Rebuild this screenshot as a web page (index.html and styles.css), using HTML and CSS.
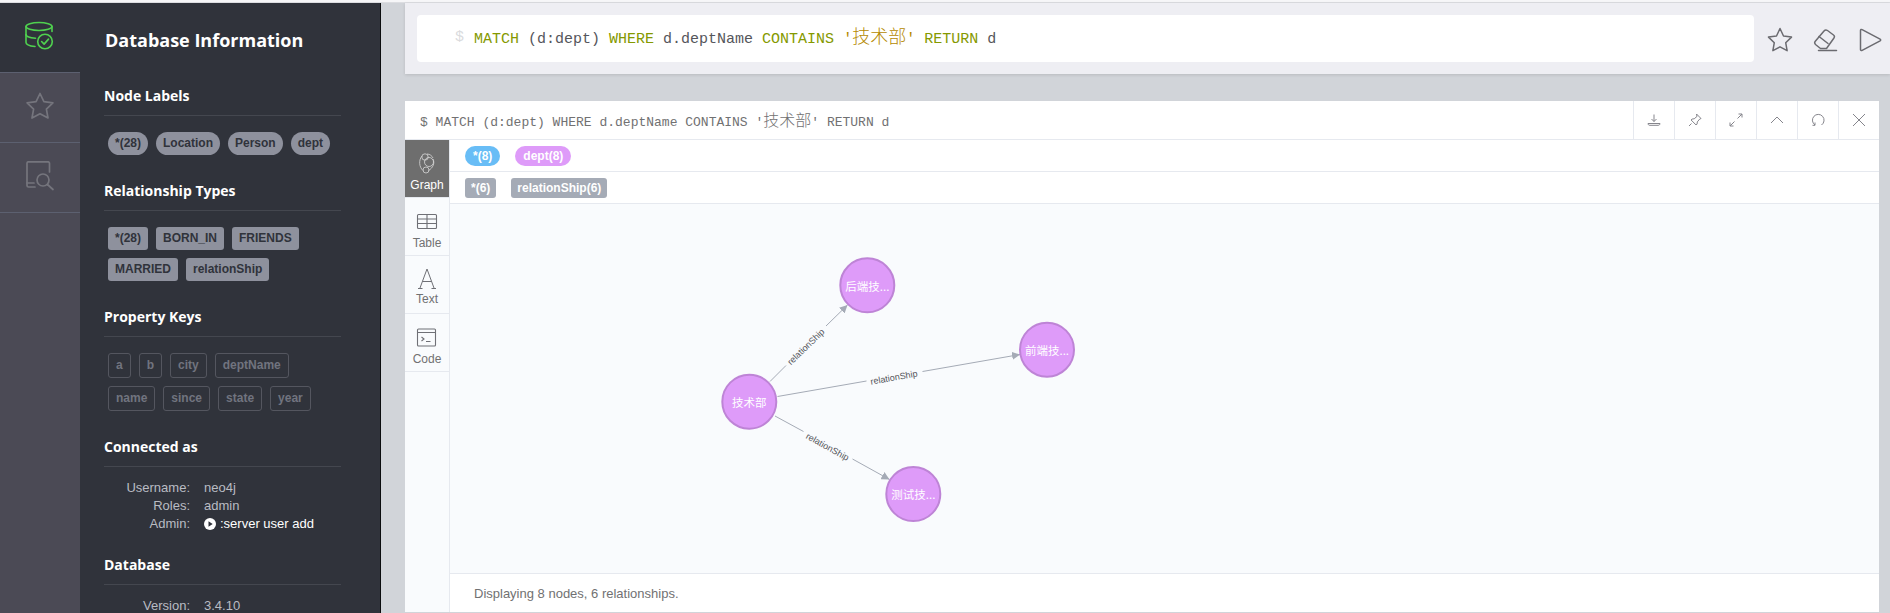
FILE: index.html
```html
<!DOCTYPE html>
<html lang="en">
<head>
<meta charset="utf-8">
<title>Neo4j Browser</title>
<link rel="stylesheet" href="styles.css">
</head>
<body>
<div class="app">
  <nav class="rail">
    <div class="rail-tab rail-tab-active">
      <svg class="rail-icon" viewBox="0 0 30 30" fill="none" stroke="#4fd14f" stroke-width="1.6" stroke-linecap="round" stroke-linejoin="round">
        <ellipse cx="14" cy="5.500" rx="13" ry="4"/>
        <path d="M1 5.500v16c0 2 4 3.500 9 4"/>
        <path d="M1 13.500c0 2 4 3.300 9.500 3.800"/>
        <path d="M27 5.500v5"/>
        <circle cx="20" cy="20.500" r="7.300"/>
        <path d="M16.600 20.500l2.500 2.600 4.400-5"/>
      </svg>
    </div>
    <div class="rail-tab">
      <svg class="rail-icon" viewBox="0 0 30 30" fill="none" stroke="#75757d" stroke-width="1.7" stroke-linejoin="round">
        <path d="M15 2.500l3.900 8.200 9 1.200-6.500 6.200 1.600 8.900-8-4.300-8 4.300 1.600-8.900-6.500-6.200 9-1.200z"/>
      </svg>
    </div>
    <div class="rail-tab">
      <svg class="rail-icon" viewBox="0 0 30 30" fill="none" stroke="#75757d" stroke-width="1.700" stroke-linecap="round" stroke-linejoin="round">
        <path d="M10 26H3.500A1.500 1.500 0 0 1 2 24.500V2.300A1.500 1.500 0 0 1 3.500 .8h19.500a1.500 1.500 0 0 1 1.500 1.500V11"/>
        <path d="M2 22h7"/>
        <circle cx="18" cy="19" r="6"/>
        <path d="M22.500 23.500l5.500 5"/>
      </svg>
    </div>
  </nav>

  <aside class="drawer">
    <h1 class="drawer-title">Database Information</h1>

    <section class="group group-labels">
      <h2 class="group-title">Node Labels</h2>
      <div class="tags">
        <span class="tag tag-round">*(28)</span>
        <span class="tag tag-round">Location</span>
        <span class="tag tag-round">Person</span>
        <span class="tag tag-round">dept</span>
      </div>
    </section>

    <section class="group group-types">
      <h2 class="group-title">Relationship Types</h2>
      <div class="tags">
        <span class="tag">*(28)</span>
        <span class="tag">BORN_IN</span>
        <span class="tag">FRIENDS</span>
        <span class="tag">MARRIED</span>
        <span class="tag">relationShip</span>
      </div>
    </section>

    <section class="group group-keys">
      <h2 class="group-title">Property Keys</h2>
      <div class="tags">
        <span class="tag tag-outline">a</span>
        <span class="tag tag-outline">b</span>
        <span class="tag tag-outline">city</span>
        <span class="tag tag-outline">deptName</span>
        <span class="tag tag-outline">name</span>
        <span class="tag tag-outline">since</span>
        <span class="tag tag-outline">state</span>
        <span class="tag tag-outline">year</span>
      </div>
    </section>

    <section class="group group-conn">
      <h2 class="group-title">Connected as</h2>
      <dl class="facts">
        <dt>Username:</dt><dd>neo4j</dd>
        <dt>Roles:</dt><dd>admin</dd>
        <dt>Admin:</dt>
        <dd class="fact-link">
          <svg class="play-dot" viewBox="0 0 12 12"><circle cx="6" cy="6" r="6" fill="#fff"/><path d="M4.500 3.200l4.200 2.800-4.200 2.800z" fill="#30333b"/></svg>
          :server user add
        </dd>
      </dl>
    </section>

    <section class="group group-db">
      <h2 class="group-title">Database</h2>
      <dl class="facts">
        <dt>Version:</dt><dd>3.4.10</dd>
      </dl>
    </section>
  </aside>

  <main class="main">
    <header class="editor">
      <div class="editor-input">
        <span class="prompt">$</span>
        <code class="cypher"><span class="kw">MATCH</span> (d:dept) <span class="kw">WHERE</span> d.deptName <span class="kw">CONTAINS</span> <span class="str">'<span class="cjk">技术部</span>'</span> <span class="kw">RETURN</span> d</code>
      </div>
      <div class="editor-actions">
        <svg class="editor-icon" viewBox="0 0 26 26" fill="none" stroke="#6b6b70" stroke-width="1.500" stroke-linejoin="round"><path d="M13 1.500l3.500 7.500 8 1.100-5.800 5.600 1.400 8-7.100-3.900-7.100 3.900 1.400-8L1.500 10.100l8-1.100z"/></svg>
        <svg class="editor-icon" viewBox="0 0 26 26" fill="none" stroke="#6b6b70" stroke-width="1.500" stroke-linecap="round" stroke-linejoin="round"><path d="M11 4c1-1.200 2.300-1.300 3.500-.5l6 4.500c1 .8 1.200 2 .3 3.200L13.500 21.500H7.500L2.500 17.500c-1-1-1-2.200-.2-3.200z"/><path d="M6 9.500l9 7"/><path d="M5.500 23.500h18"/></svg>
        <svg class="editor-icon" viewBox="0 0 26 26" fill="none" stroke="#6b6b70" stroke-width="1.500" stroke-linejoin="round"><path d="M1.500 3.500c0-1 .8-1.300 1.600-.9l18 9.500c.8.500.8 1.300 0 1.800l-18 9.500c-.8.400-1.600 0-1.600-.9z"/></svg>
      </div>
    </header>

    <article class="frame">
      <div class="frame-head">
        <code class="frame-query">$ MATCH (d:dept) WHERE d.deptName CONTAINS '<span class="cjk-small">技术部</span>' RETURN d</code>
        <div class="frame-buttons">
          <span class="frame-btn"><svg viewBox="0 0 14 14" fill="none" stroke="#85858c" stroke-width="1"><path d="M7 1.500v7M4.500 6L7 8.500 9.500 6"/><path d="M1 10.500c0 1.200.8 1.800 2 1.800h8c1.200 0 2-.6 2-1.800z"/></svg></span>
          <span class="frame-btn"><svg viewBox="0 0 14 14" fill="none" stroke="#85858c" stroke-width="1" stroke-linejoin="round"><path d="M8.500 1l4.500 4.500-1.300.6-2.400 2.800-.2 2.100-1 1-5-5 1-1 2.100-.2 2.800-2.400z"/><path d="M3.500 10.500L1 13"/></svg></span>
          <span class="frame-btn"><svg viewBox="0 0 14 14" fill="none" stroke="#85858c" stroke-width="1"><path d="M8.500 5.500L13 1M9.500 1H13v3.500"/><path d="M5.500 8.500L1 13M1 9.500V13h3.500"/></svg></span>
          <span class="frame-btn"><svg viewBox="0 0 14 14" fill="none" stroke="#85858c" stroke-width="1"><path d="M1 10l6-6 6 6"/></svg></span>
          <span class="frame-btn"><svg viewBox="0 0 14 14" fill="none" stroke="#85858c" stroke-width="1"><path d="M10.500 12A5.800 5.800 0 1 0 4 12"/><path d="M4 9.500V12.300H1.500"/></svg></span>
          <span class="frame-btn"><svg viewBox="0 0 14 14" fill="none" stroke="#85858c" stroke-width="1"><path d="M1 1l12 12M13 1L1 13"/></svg></span>
        </div>
      </div>

      <div class="frame-body">
        <ul class="views">
          <li class="view view-active">
            <svg class="view-icon" viewBox="0 0 24 24" fill="none" stroke="#d8d8d8" stroke-width=".8"><circle cx="10" cy="6" r="3.200"/><circle cx="14" cy="11" r="4.500"/><circle cx="11" cy="19" r="3"/><path d="M7 5C3.500 9 4 16 8 19.500M18 8c2 4 0 9-4.500 11.500M12 3c3 0 5 2 6 4"/></svg>
            <span>Graph</span>
          </li>
          <li class="view">
            <svg class="view-icon" viewBox="0 0 24 24" fill="none" stroke="#6f7076" stroke-width="1.100"><rect x="2.500" y="4.500" width="19" height="14" rx="1"/><path d="M2.500 9h19M2.500 13.500h19M12 4.500v14"/></svg>
            <span>Table</span>
          </li>
          <li class="view view-compact">
            <svg class="view-icon" viewBox="0 0 24 24" fill="none" stroke="#6f7076" stroke-width="1"><path d="M12 2L5 21M12 2l7 19M7.500 14.500h9M3 21.500h4.500M16.500 21.500H21"/></svg>
            <span>Text</span>
          </li>
          <li class="view">
            <svg class="view-icon" viewBox="0 0 24 24" fill="none" stroke="#6f7076" stroke-width="1.100"><rect x="2.500" y="3" width="18" height="17" rx="1"/><path d="M2.500 6.500h18M6.500 11l2.500 2-2.500 2M11 15.500h4.500"/></svg>
            <span>Code</span>
          </li>
        </ul>

        <div class="result">
          <div class="legend">
            <span class="chip chip-all">*(8)</span>
            <span class="chip chip-dept">dept(8)</span>
          </div>
          <div class="legend">
            <span class="chip chip-rel">*(6)</span>
            <span class="chip chip-rel">relationShip(6)</span>
          </div>

          <div class="canvas">
            <svg class="graph" viewBox="450 204 1429 369" preserveAspectRatio="xMinYMin">
              <defs>
                <marker id="tip" viewBox="0 0 10 10" refX="10" refY="5" markerWidth="8" markerHeight="8" markerUnits="userSpaceOnUse" orient="auto"><path d="M0 0L10 5 0 10z" fill="#a5abb6"/></marker>
              </defs>
              <g class="edge">
                <line x1="770" y1="381.500" x2="786" y2="365.500"/>
                <line x1="826" y1="326" x2="847.500" y2="305" marker-end="url(#tip)"/>
                <line x1="777.500" y1="396.500" x2="866.500" y2="381"/>
                <line x1="922.500" y1="371.500" x2="1020" y2="354.500" marker-end="url(#tip)"/>
                <line x1="775" y1="416" x2="803.500" y2="431.500"/>
                <line x1="852.500" y1="459" x2="889.500" y2="479.500" marker-end="url(#tip)"/>
              </g>
              <g class="edge-labels">
                <text transform="translate(808 349) rotate(-44)">relationShip</text>
                <text transform="translate(894.500 380.500) rotate(-10)">relationShip</text>
                <text transform="translate(826 449.500) rotate(29)">relationShip</text>
              </g>
              <g class="nodes">
                <circle cx="749.300" cy="401.700" r="27"/>
                <circle cx="867.300" cy="285.300" r="27"/>
                <circle cx="1047" cy="349.700" r="27"/>
                <circle cx="913.300" cy="494" r="27"/>
              </g>
              <g class="node-labels">
                <text x="749.300" y="407">技术部</text>
                <text x="867.300" y="291">后端技...</text>
                <text x="1047" y="355">前端技...</text>
                <text x="913.300" y="499">测试技...</text>
              </g>
            </svg>
          </div>

          <footer class="status">Displaying 8 nodes, 6 relationships.</footer>
        </div>
      </div>
    </article>
  </main>
</div>
</body>
</html>
```

FILE: styles.css
```css
* { box-sizing: border-box; }
html, body { margin: 0; padding: 0; height: 613px; overflow: hidden; background: #f6f6f8; }
body { font-family: "Liberation Sans", Arial, sans-serif; }

.app { display: flex; height: 611px; margin-top: 2px; border-top: 1px solid #dcdde1; }

/* left rail */
.rail { width: 80px; flex: none; background: #4b4a55; }
.rail-tab { height: 70px; border-bottom: 1px solid #5c6070; display: flex; justify-content: center; padding-top: 18px; }
.rail-tab-active { background: #30333b; }
.rail-icon { width: 30px; height: 30px; }

/* drawer */
.drawer { width: 301px; flex: none; height: 610px; overflow: hidden; background: #30333b; border-right: 1px solid #0c0d0f; padding: 0 39px 0 24px; color: #fff; }
.drawer-title { margin: 0; padding: 23px 0 0 1px; height: 85px; font: 700 18px/28px "Open Sans", sans-serif; }
.group-title { margin: 0; height: 28px; font: 700 14px/16px "Open Sans", sans-serif; border-bottom: 1px solid #44474f; }
.tags { display: flex; flex-wrap: wrap; gap: 8px; padding: 16px 0 0 4px; }
.tag { height: 23px; padding: 0 7px; border-radius: 3px; background: #8e919d; color: #30333b; font: 700 12px/23px "Liberation Sans", sans-serif; white-space: nowrap; }
.tag-round { border-radius: 12px; }
.tag-outline { height: 25px; line-height: 23px; background: transparent; color: #71747f; border: 1px solid #54565f; }

.group-labels { height: 95px; }
.group-types { height: 126px; }
.group-keys { height: 130px; }
.group-conn { height: 118px; }
.facts { margin: 0; padding-top: 12px; display: grid; grid-template-columns: 86px 1fr; column-gap: 14px; font: 13px/18px "Liberation Sans", sans-serif; color: #b9bcc3; }
.facts dt { text-align: right; }
.facts dd { margin: 0; }
.fact-link { color: #fff; display: flex; align-items: center; gap: 4px; }
.play-dot { width: 12px; height: 12px; }

/* main */
.main { flex: 1; min-width: 0; background: #d1d4d9; padding-left: 24px; }
.editor { height: 71px; background: #eeeef3; display: flex; padding: 12px 0 0 12px; box-shadow: 0 1px 3px rgba(0,0,0,.12); }
.editor-input { width: 1337px; height: 47px; background: #fff; border-radius: 4px; padding: 0 0 2px 38px; display: flex; align-items: center; gap: 10px; font: 15px/24px "Liberation Mono", monospace; }
.prompt { color: #dadbdd; }
.cypher { font: inherit; color: #55565b; white-space: nowrap; }
.kw { color: #859900; }
.str { color: #b58900; }
.cjk { font-family: "Noto Sans CJK SC", sans-serif; font-size: 18px; font-weight: 300; }
.editor-actions { display: flex; gap: 20px; padding: 12px 0 0 13px; }
.editor-icon { width: 26px; height: 26px; }

.frame { width: 1474px; height: 511px; margin-top: 27px; background: #fff; display: flex; flex-direction: column; }
.frame-head { height: 39px; flex: none; display: flex; align-items: center; justify-content: space-between; border-bottom: 1px solid #e6e9ef; padding-left: 15px; }
.frame-query { font: 13px/20px "Liberation Mono", monospace; color: #717172; white-space: nowrap; padding-top: 2px; }
.cjk-small { font-family: "Noto Sans CJK SC", sans-serif; font-size: 16px; font-weight: 300; }
.frame-buttons { display: flex; height: 100%; }
.frame-btn { width: 41px; height: 100%; border-left: 1px solid #e6e9ef; display: flex; align-items: center; justify-content: center; }
.frame-btn svg { width: 14px; height: 14px; }

.frame-body { flex: 1; display: flex; min-height: 0; }
.views { list-style: none; margin: 0; padding: 0; width: 45px; flex: none; background: #f9fbfd; border-right: 1px solid #e6e9ef; }
.view { height: 58px; border-bottom: 1px solid #e6e9ef; display: flex; flex-direction: column; align-items: center; gap: 1px; padding-top: 12px; font: 12px/16px "Liberation Sans", sans-serif; color: #717172; }
.view-active { height: 58px; padding-top: 11px; gap: 2px; background: #6e6e6e; color: #fff; }
.view-compact { padding-top: 11px; gap: 0; }
.view-icon { width: 24px; height: 24px; }

.result { flex: 1; min-width: 0; display: flex; flex-direction: column; }
.legend { height: 32px; flex: none; display: flex; align-items: center; gap: 15px; padding-left: 15px; border-bottom: 1px solid #e6e9ef; }
.chip { height: 20px; padding: 0 8px; color: #fff; font: 700 12px/20px "Liberation Sans", sans-serif; border-radius: 10px; white-space: nowrap; }
.chip-all { background: #68bdf6; }
.chip-dept { background: #de9bf9; }
.chip-rel { padding: 0 6px; background: #a5abb6; border-radius: 3px; }

.canvas { flex: 1; min-height: 0; background: #f9fbfd; border-bottom: 1px solid #e6e9ef; }
.graph { display: block; width: 100%; height: 100%; }
.edge line { stroke: #a5abb6; stroke-width: 1; }
.edge-labels text { font: 9px "Liberation Sans", sans-serif; fill: #55565b; text-anchor: middle; }
.nodes circle { fill: #de9bf9; stroke: #be84d6; stroke-width: 2; }
.node-labels text { font: 11.5px "Noto Sans CJK SC", "Liberation Sans", sans-serif; fill: #fff; text-anchor: middle; }

.status { height: 38px; flex: none; padding-left: 24px; font: 13px/40px "Liberation Sans", sans-serif; color: #717172; }
```
